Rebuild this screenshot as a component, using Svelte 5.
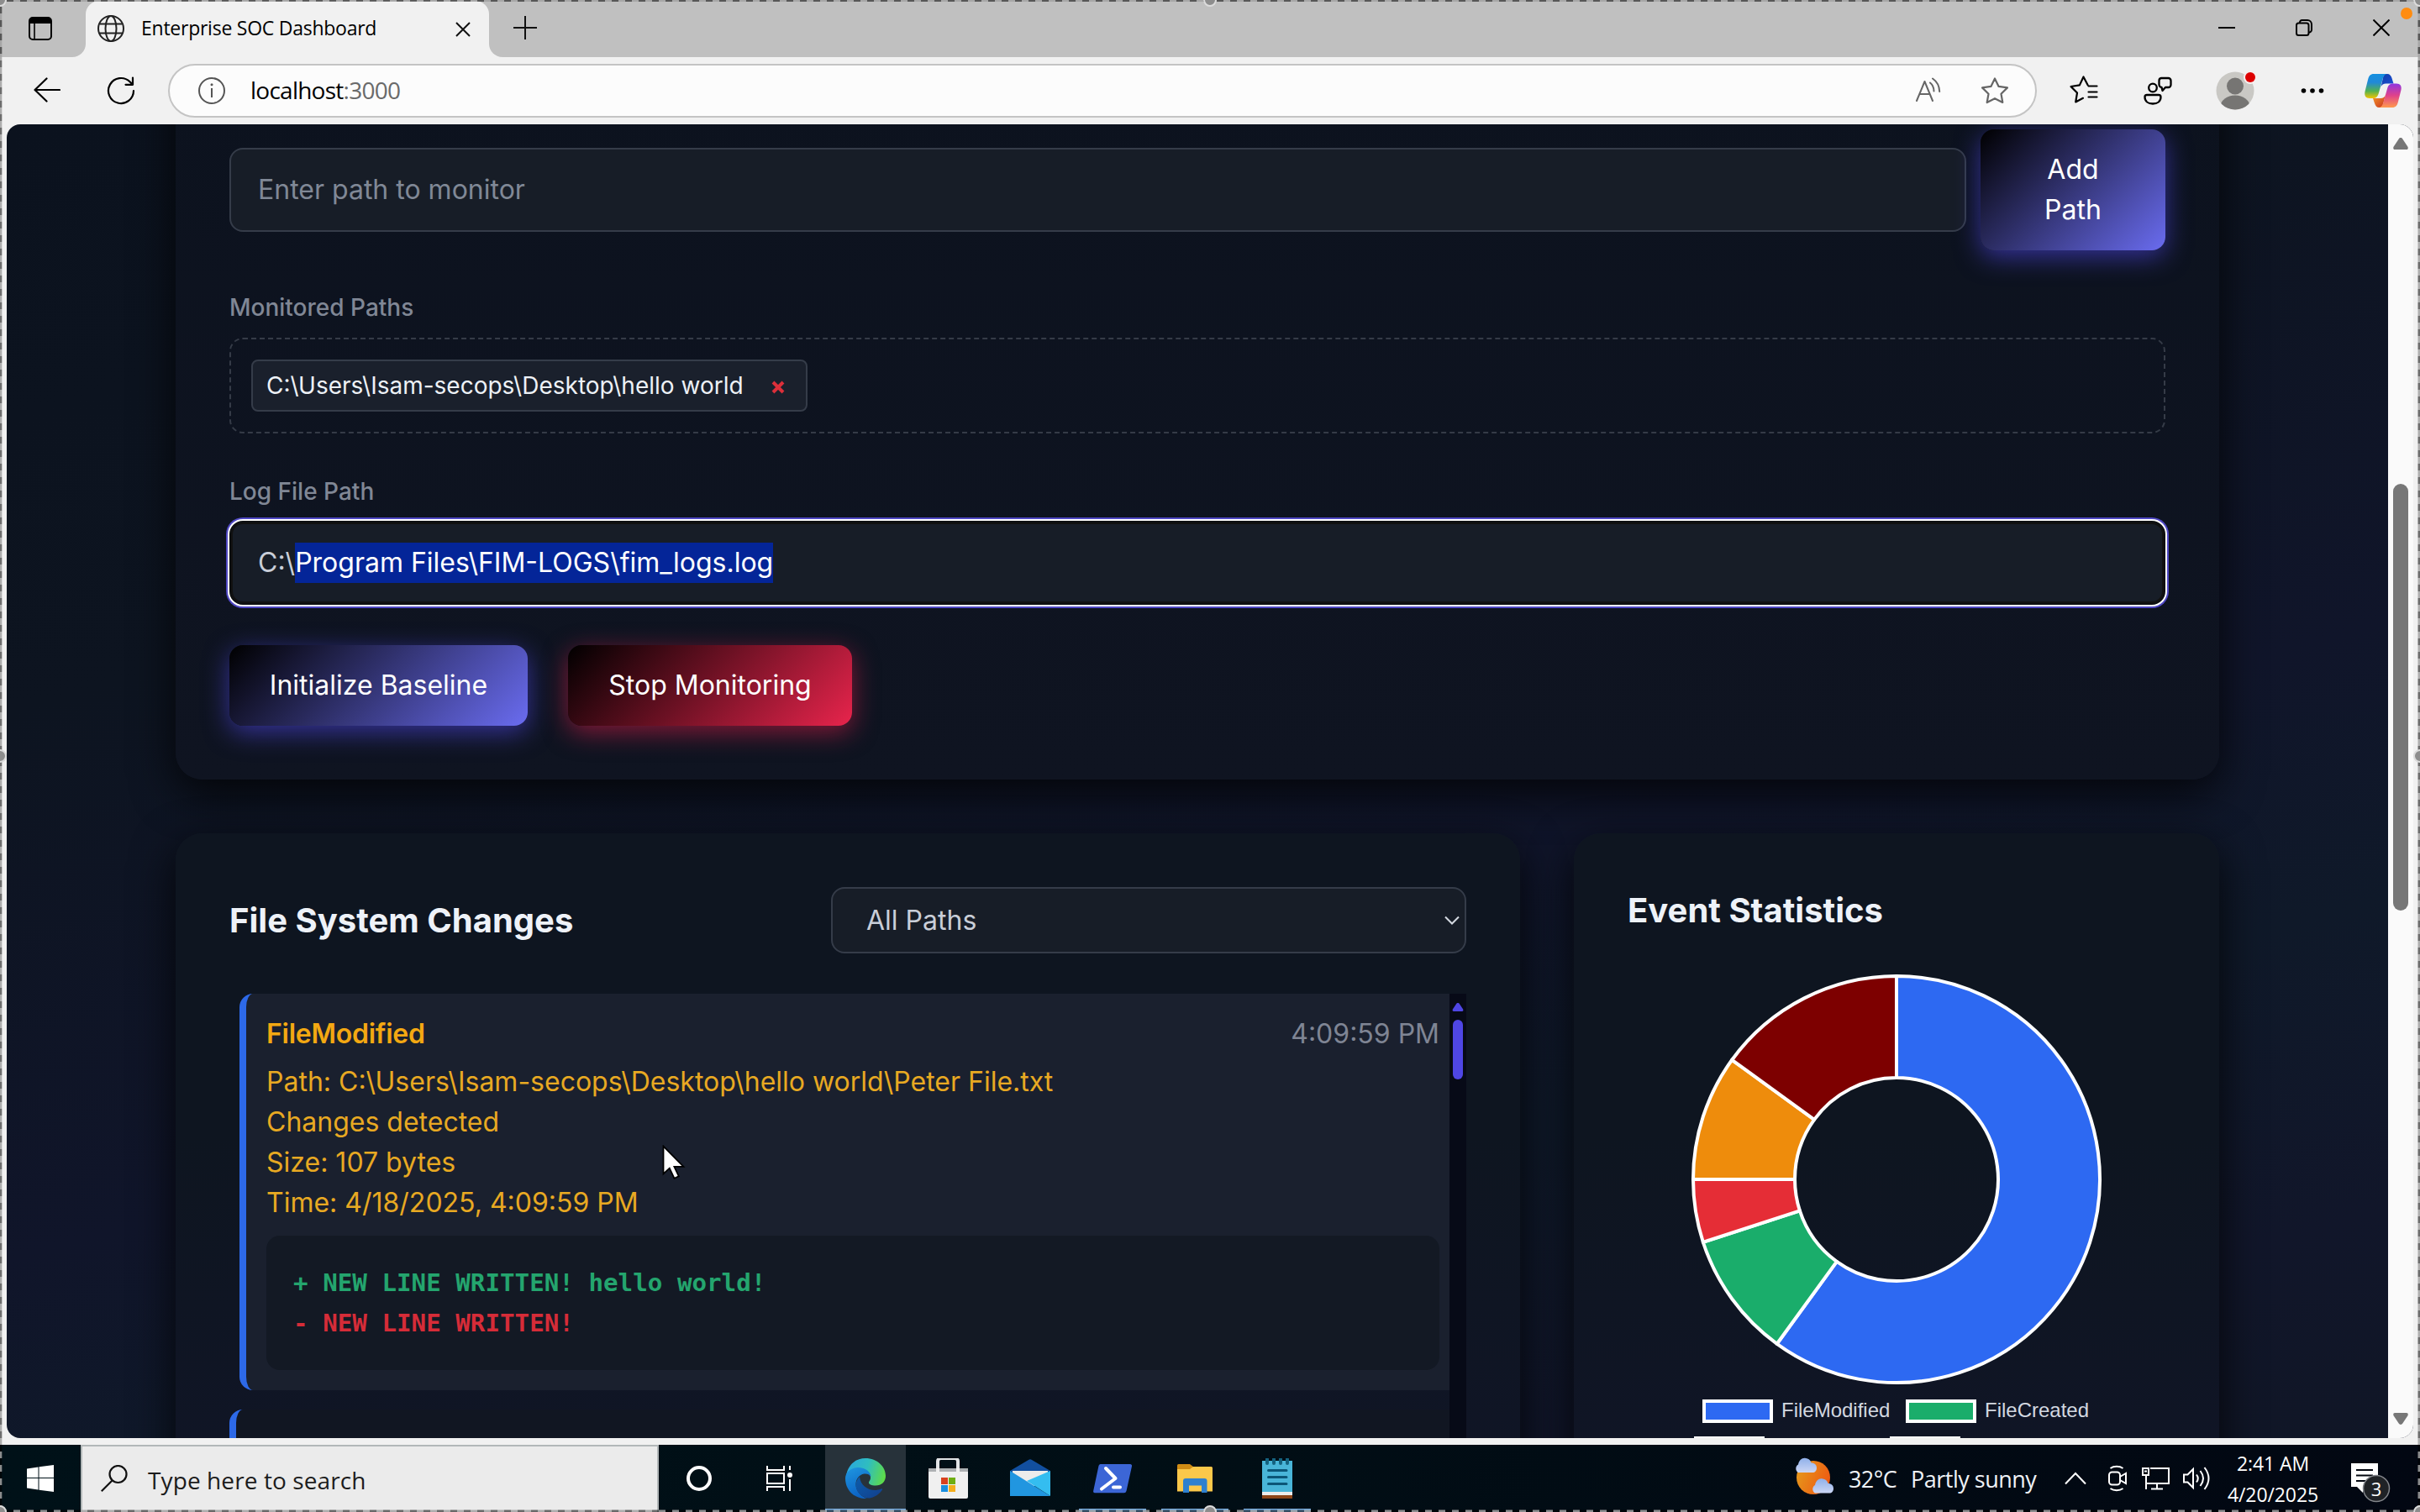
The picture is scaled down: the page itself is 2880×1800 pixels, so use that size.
<script>
  const monitored = ['C:\\Users\\Isam-secops\\Desktop\\hello world'];

  const details = [
    'Path: C:\\Users\\Isam-secops\\Desktop\\hello world\\Peter File.txt',
    'Changes detected',
    'Size: 107 bytes',
    'Time: 4/18/2025, 4:09:59 PM'
  ];

  const stats = [
    { label: 'FileModified', share: 0.6, color: '#2d69f2' },
    { label: 'FileCreated', share: 0.1, color: '#1aad6b' },
    { label: 'FileDeleted', share: 0.05, color: '#e52d36' },
    { label: 'FileRenamed', share: 0.1, color: '#ee8c0c' },
    { label: 'AccessDenied', share: 0.15, color: '#7d0000' }
  ];

  const C = 246;
  const R = 242;
  const r = 121;

  function point(radius, t) {
    const a = t * Math.PI * 2;
    return `${(C + radius * Math.sin(a)).toFixed(2)} ${(C - radius * Math.cos(a)).toFixed(2)}`;
  }

  let start = 0;
  const slices = stats.map((s) => {
    const end = start + s.share;
    const large = s.share > 0.5 ? 1 : 0;
    const d = `M${point(R, start)}A${R} ${R} 0 ${large} 1 ${point(R, end)}L${point(r, end)}A${r} ${r} 0 ${large} 0 ${point(r, start)}Z`;
    start = end;
    return { d, color: s.color };
  });
</script>

<div class="screen">
  <header class="tabs">
    <div class="tabs-left">
      <svg width="28" height="28" viewBox="0 0 28 28"><rect x="1" y="1" width="26" height="26" rx="4" fill="none" stroke="#000" stroke-width="2" /><path d="M1 8V5a4 4 0 0 1 4-4h18a4 4 0 0 1 4 4v3zM6.2 8h1.6v18H6.2z" /></svg>
    </div>
    <div class="tab-slot">
      <div class="tab">
        <svg width="32" height="32" viewBox="0 0 32 32" fill="none" stroke="#222" stroke-width="2"><circle cx="16" cy="16" r="15" /><ellipse cx="16" cy="16" rx="6.5" ry="15" /><path d="M2.5 10.5h27M2.5 21.5h27" /></svg>
        <span class="tab-title">Enterprise SOC Dashboard</span>
        <svg class="tab-close" width="18" height="18" viewBox="0 0 18 18" stroke="#111" stroke-width="2"><path d="M1 1l16 16M17 1L1 17" /></svg>
      </div>
    </div>
    <div class="tabs-right">
      <svg width="28" height="28" viewBox="0 0 28 28" stroke="#111" stroke-width="2"><path d="M14 0v28M0 14h28" /></svg>
      <div class="controls">
        <svg width="20" height="20" viewBox="0 0 20 20" stroke="#000" stroke-width="2"><path d="M0 10h20" /></svg>
        <svg width="20" height="20" viewBox="0 0 20 20" fill="none" stroke="#000" stroke-width="2"><rect x="1" y="4.5" width="14.5" height="14.5" rx="2.5" /><path d="M5 4V3.500a2.500 2.500 0 0 1 2.500-2.500H14a5 5 0 0 1 5 5v6.500a3 3 0 0 1-3 3" /></svg>
        <svg width="20" height="20" viewBox="0 0 20 20" stroke="#000" stroke-width="2"><path d="M.5.5l19 19M19.500.5l-19 19" /></svg>
      </div>
    </div>
  </header>

  <nav class="toolbar">
    <svg class="back" width="32" height="32" viewBox="0 0 32 32" fill="none" stroke="#000" stroke-width="2.200" stroke-linecap="round" stroke-linejoin="round"><path d="M31 15H1.500M15.500 1.500L1.500 15l14 13.500" /></svg>
    <svg class="reload" width="34" height="34" viewBox="0 0 34 34" fill="none" stroke="#000" stroke-width="2.200" stroke-linecap="round" stroke-linejoin="round"><path d="M32 17a15 15 0 1 1-4.500-10.700L31 9.800M31 1.500v8.300h-8.500" /></svg>
    <div class="address">
      <svg width="34" height="34" viewBox="0 0 34 34" fill="none" stroke="#555" stroke-width="2"><circle cx="17" cy="17" r="15" /><path d="M17 14v11" /><circle cx="17" cy="9.800" r="1.500" fill="#555" stroke="none" /></svg>
      <span class="url">localhost<span class="port">:3000</span></span>
      <svg class="aloud" width="34" height="32" viewBox="0 0 34 32" fill="none" stroke="#666" stroke-width="2" stroke-linecap="round" stroke-linejoin="round"><path d="M2 28L11.500 5 21 28M5.500 20h12M18 6.500c3 2.500 4.500 5.800 4.500 10M21 1.500c5 3.500 8 8.500 8.200 15.500" /></svg>
      <svg class="fav" width="34" height="34" viewBox="0 0 34 34" fill="none" stroke="#666" stroke-width="2.200" stroke-linejoin="round"><path d="M17 2.500l4.600 9.400 10.400 1.500-7.500 7.300 1.800 10.300L17 26.200 7.700 31l1.800-10.300L2 13.400l10.400-1.500z" /></svg>
    </div>
    <svg class="t1" width="48" height="48" viewBox="0 0 48 48" fill="none" stroke="#000" stroke-width="2.200" stroke-linecap="round" stroke-linejoin="round"><path d="M28.500 17l-5-9.500-4.600 9.900L8.500 19l7.500 7.500L14.200 37.500l8.800-4.700M29.500 18.500h10M29.500 25.500h10M29.500 31.500h10" /></svg>
    <svg class="t2" width="48" height="48" viewBox="0 0 48 48" fill="none" stroke="#000" stroke-width="2.300" stroke-linejoin="round"><circle cx="18" cy="20.500" r="4.800" /><path d="M11 29h14a2.500 2.500 0 0 1 2.500 2.500c0 5-4 8-9.500 8s-9.500-3-9.500-8A2.500 2.500 0 0 1 11 29zM28 9h8.500a3 3 0 0 1 3 3v5a3 3 0 0 1-3 3h-3.500l-3.500 4-1-4.200a3 3 0 0 1-3-3V12a3 3 0 0 1 2.500-3z" /></svg>
    <svg class="t3" width="56" height="56" viewBox="0 0 56 56"><clipPath id="av"><circle cx="26" cy="28" r="22.500" /></clipPath><circle cx="26" cy="28" r="22.500" fill="#c9c8c4" /><g clip-path="url(#av)" fill="#767573"><circle cx="26" cy="22.500" r="10" /><ellipse cx="26" cy="47" rx="17.500" ry="13.500" /></g><circle cx="44" cy="12" r="8" fill="#f6eeee" /><circle cx="44" cy="12" r="6" fill="#d00" /></svg>
    <svg class="t4" width="48" height="48" viewBox="0 0 48 48"><circle cx="13.500" cy="24" r="2.800" /><circle cx="24" cy="24" r="2.800" /><circle cx="34.500" cy="24" r="2.800" /></svg>
    <svg class="t5" width="48" height="48" viewBox="0 0 48 48">
      <defs>
        <linearGradient id="c1" x1="0" y1="0" x2="0" y2="1"><stop offset="0" stop-color="#1590e0" /><stop offset=".35" stop-color="#2189d8" /><stop offset=".7" stop-color="#52b152" /><stop offset="1" stop-color="#f3c400" /></linearGradient>
        <linearGradient id="c2" x1="0" y1="0" x2="0" y2="1"><stop offset="0" stop-color="#8f35e0" /><stop offset=".5" stop-color="#e0428a" /><stop offset="1" stop-color="#ff9a4d" /></linearGradient>
        <linearGradient id="c3" x1="0" y1="0" x2="1" y2="1"><stop offset="0" stop-color="#123fa8" /><stop offset="1" stop-color="#1c50d8" /></linearGradient>
        <linearGradient id="c4" x1="0" y1="0" x2="1" y2="1"><stop offset="0" stop-color="#f59a2c" /><stop offset="1" stop-color="#c8321e" /></linearGradient>
      </defs>
      <path d="M25 4h4c3 0 4.500 2 5.500 5l2 6.500h-9c-3 0-5 1.500-6 4z" fill="url(#c3)" />
      <path d="M23 44h-3.500c-3 0-4.500-2-5.500-5l-2-6h9c3 0 5-1.500 6-4z" fill="url(#c4)" />
      <path d="M13 4h16c-3 0-4.500 3-5.500 6.500L18.500 28c-1 3-3 5-6 5H8c-4.500 0-6.500-3-5.500-8L6 11c1-4.500 3-7 7-7z" fill="url(#c1)" />
      <path d="M35 44H19c3 0 4.500-3 5.500-6.500L29.500 20c1-3 3-4.500 6-4.500H40c4.500 0 6.500 3 5.500 7.500L42 37c-1 4.500-3 7-7 7z" fill="url(#c2)" />
    </svg>
  </nav>

  <main class="viewport">
    <div class="page">
      <section class="card config">
        <div class="path-row">
          <div class="field placeholder">Enter path to monitor</div>
          <button class="btn add">Add<br />Path</button>
        </div>
        <p class="label">Monitored Paths</p>
        <div class="dropzone">
          {#each monitored as path}
            <div class="chip"><span>{path}</span><svg width="16" height="16" viewBox="0 0 16 16" stroke="#dc2f3a" stroke-width="4"><path d="M2 2l12 12M14 2L2 14" /></svg></div>
          {/each}
        </div>
        <p class="label log">Log File Path</p>
        <div class="field focused"><span>C:\</span><mark>Program Files\FIM-LOGS\fim_logs.log</mark></div>
        <div class="actions">
          <button class="btn init">Initialize Baseline</button>
          <button class="btn stop">Stop Monitoring</button>
        </div>
      </section>

      <div class="columns">
        <section class="card changes">
          <div class="head">
            <h2>File System Changes</h2>
            <div class="select">
              <span>All Paths</span>
              <svg width="18" height="12" viewBox="0 0 18 12" fill="none" stroke="#d5dae2" stroke-width="2"><path d="M1 1.500l8 8 8-8" /></svg>
            </div>
          </div>
          <div class="feed">
            <div class="events">
              <article class="event active">
                <div class="event-head"><strong>FileModified</strong><time>4:09:59 PM</time></div>
                <div class="details">
                  {#each details as line}<p>{line}</p>{/each}
                </div>
                <div class="diff">
                  <p class="plus">+ NEW LINE WRITTEN! hello world!</p>
                  <p class="minus">- NEW LINE WRITTEN!</p>
                </div>
              </article>
              <article class="event"></article>
            </div>
            <div class="track">
              <svg width="14" height="10" viewBox="0 0 14 10" fill="#4f46e5"><path d="M7 0c1 0 1.500.5 2 1.300l4 6C13.800 8.700 13.300 10 12 10H2C.7 10 .2 8.700 1 7.300l4-6C5.500.5 6 0 7 0z" /></svg>
              <div class="thumb"></div>
            </div>
          </div>
        </section>

        <section class="card statistics">
          <h2>Event Statistics</h2>
          <svg class="donut" width="492" height="492" viewBox="0 0 492 492" stroke="#fff" stroke-width="4" stroke-linejoin="round">
            {#each slices as s}<path d={s.d} fill={s.color} />{/each}
          </svg>
          <div class="legend">
            <i class="blue"></i><span>FileModified</span><i class="green"></i><span>FileCreated</span>
          </div>
          <div class="legend second"><i class="red"></i><i class="orange"></i></div>
        </section>
      </div>
    </div>

    <aside class="scrollbar">
      <svg width="18" height="14" viewBox="0 0 18 14" fill="#777"><path d="M9 0c1 0 1.700.5 2.300 1.400l6 9.200C18.300 12.300 17.600 14 16 14H2C.4 14-.3 12.300.7 10.600l6-9.200C7.300.5 8 0 9 0z" /></svg>
      <div class="bar"></div>
      <svg class="down" width="18" height="14" viewBox="0 0 18 14" fill="#777"><path d="M9 14c-1 0-1.700-.5-2.300-1.400l-6-9.200C-.3 1.700.4 0 2 0h14c1.600 0 2.300 1.700 1.300 3.400l-6 9.200C10.700 13.500 10 14 9 14z" /></svg>
    </aside>
  </main>

  <footer class="taskbar">
    <div class="start"><svg width="32" height="32" viewBox="0 0 32 32" fill="#fff"><path d="M0 4.500l13.500-2V15H0zM14.500 2.300L32 0v15H14.500zM0 16h13.500v13.500L0 27.500zM14.500 16H32v16l-17.500-2.300z" /></svg></div>
    <div class="search">
      <svg width="32" height="32" viewBox="0 0 32 32" fill="none" stroke="#111" stroke-width="2.200"><circle cx="20.500" cy="11" r="10" /><path d="M13.500 18.500L.8 31.200" /></svg>
      <span>Type here to search</span>
    </div>
    <div class="app"><svg width="32" height="32" viewBox="0 0 32 32" fill="none" stroke="#fff" stroke-width="4"><circle cx="16" cy="16" r="13" /></svg></div>
    <div class="app view"><svg width="34" height="32" viewBox="0 0 34 32" fill="none" stroke="#fff" stroke-width="2"><path d="M2 1v5h20V1M2 31v-5h20v5M2 10h20v12H2zM29 1v5M29 17v14" /><circle cx="29" cy="12" r="3" fill="#fff" stroke="none" /></svg></div>
    <div class="app edge">
      <svg width="48" height="48" viewBox="0 0 48 48">
        <defs>
          <linearGradient id="e1" x1="0" y1=".4" x2="1" y2=".6"><stop offset="0" stop-color="#2aa8dd" /><stop offset=".5" stop-color="#2fbdc0" /><stop offset="1" stop-color="#5fdc46" /></linearGradient>
          <linearGradient id="e2" x1="0" y1="0" x2=".4" y2="1"><stop offset="0" stop-color="#1f97e0" /><stop offset="1" stop-color="#0b62c4" /></linearGradient>
          <linearGradient id="e3" x1="0" y1="0" x2="1" y2="1"><stop offset="0" stop-color="#0c5cab" /><stop offset="1" stop-color="#123f8c" /></linearGradient>
        </defs>
        <path d="M1 21C3 8 12 0 24 0c14 0 24 10 24 21 0 7-5 11.500-12 11.500-5 0-8-1.500-8-3.500 0-1.500 2-2.500 2-6 0-6-6-11-13-11C9 12 3 15 1 21z" fill="url(#e1)" />
        <path d="M0 24c0-7 7-13 15-13 9 0 15 5 15.500 11-2-3-5-4-8-3.500-6 1-10 6-10 12.500 0 8 6 14.500 13 17C11 49 0 38 0 24z" fill="url(#e2)" />
        <path d="M17 22c-3 3-4.500 6-4.500 10C13 42 22 48 29 47.500c6-1 12-5 15-10 .5-1-.5-1.500-1.500-1C32 41 18 35 17 22z" fill="url(#e3)" />
      </svg>
    </div>
    <div class="app">
      <svg width="48" height="48" viewBox="0 0 48 48"><path d="M12 20V3.500A3.500 3.500 0 0 1 15.500 0h17A3.500 3.500 0 0 1 36 3.500V20" fill="none" stroke="#e2e4e6" stroke-width="4" /><path d="M1 12h47v5H1z" fill="#aeb1b3" /><path d="M1 16h47v30a2 2 0 0 1-2 2H3a2 2 0 0 1-2-2z" fill="#f0f0f0" /><path d="M10 12h4v4h-4zM34 12h4v4h-4z" fill="#f0f0f0" /><path d="M16 23h8v8h-8z" fill="#d8421f" /><path d="M25 23h8v8h-8z" fill="#6fae12" /><path d="M16 32h8v8h-8z" fill="#1a8ede" /><path d="M25 32h8v8h-8z" fill="#f5ae1c" /></svg>
    </div>
    <div class="app">
      <svg width="48" height="48" viewBox="0 0 48 48"><path d="M0 15L22 2q2-1.500 4 0l22 13v8H0z" fill="#124f9f" /><path d="M3 15h42v18H3z" fill="#ececec" /><path d="M48 15v30L20 27z" fill="#34bdf0" /><path d="M0 15l48 30H0z" fill="#2196e0" /></svg>
    </div>
    <div class="app running">
      <svg width="48" height="48" viewBox="0 0 48 48"><path d="M9.500 7H45a2 2 0 0 1 2 2.500L40.500 39a3 3 0 0 1-3 2.300H3a2 2 0 0 1-1.800-2.500L7.500 9a2.500 2.500 0 0 1 2-2z" fill="#3c66d6" /><path d="M16 12l11.500 12L11 36.500" fill="none" stroke="#fff" stroke-width="4" stroke-linecap="round" stroke-linejoin="round" /><path d="M25 34.500h8" stroke="#fff" stroke-width="4" stroke-linecap="round" /></svg>
    </div>
    <div class="app running">
      <svg width="48" height="48" viewBox="0 0 48 48"><path d="M3 8.500A1.500 1.500 0 0 1 4.500 7H18l4 3v5H3z" fill="#d08c14" /><path d="M3 13h15l4-3h21.500A1.500 1.500 0 0 1 45 11.500v28H3z" fill="#fbc84a" /><path d="M10 41V27a3 3 0 0 1 3-3h22.500a3 3 0 0 1 3 3v14H32v-8.500H17V41z" fill="#2f80cf" /></svg>
    </div>
    <div class="app running notes">
      <svg width="48" height="48" viewBox="0 0 48 48"><path d="M6 44h36v4H6z" fill="#8d4518" /><path d="M6 38h36v6H6z" fill="#ececec" /><path d="M6 3h36v37H6z" fill="#49b5d8" /><path d="M12 1v5M20 1v5M28 1v5M36 1v5" stroke="#14627f" stroke-width="4" stroke-linecap="round" /><path d="M13.500 14.500h21.500M13.500 22.500h21.500M13.500 30.500h21.500" stroke="#0b5677" stroke-width="3" stroke-linecap="round" /></svg>
    </div>

    <div class="tray">
      <svg class="weather" width="50" height="46" viewBox="0 0 50 46">
        <defs><linearGradient id="sun" x1="0" y1=".2" x2="1" y2=".6"><stop offset="0" stop-color="#e59a1c" /><stop offset="1" stop-color="#ee5a12" /></linearGradient><linearGradient id="cl" x1="0" y1="0" x2="0" y2="1"><stop offset="0" stop-color="#8fb0ea" /><stop offset="1" stop-color="#cbd6f4" /></linearGradient></defs>
        <circle cx="24" cy="24" r="20" fill="url(#sun)" />
        <path d="M6 18a5.500 5.500 0 0 1 0-9.500 C7 3 11 0 15 1c4 .5 6 3 6.500 5.500 4 0 6.500 2.500 6.500 6s-2 5.500-5 5.500z" fill="url(#cl)" />
        <path d="M26 42.500a5.500 5.500 0 0 1 0-9.500c1-5.500 5-8.500 9-7.500 4 .5 6 3 6.500 5.500 4 0 6.500 2.500 6.500 6s-2 5.500-5 5.500z" fill="url(#cl)" />
      </svg>
      <span class="temp">32°C</span>
      <span class="sky">Partly sunny</span>
      <svg class="chev" width="26" height="16" viewBox="0 0 26 16" fill="none" stroke="#fff" stroke-width="2"><path d="M1 14.500L13 2l12 12.500" /></svg>
      <svg class="cam" width="24" height="32" viewBox="0 0 24 32" fill="none" stroke="#fff" stroke-width="2"><rect x="2" y="8.500" width="13" height="15" rx="3.500" /><path d="M15 14l7-4v12l-7-4M3.500 4c4-3 11-3 15 0M3.500 28c4 3 11 3 15 0" /></svg>
      <svg class="net" width="34" height="30" viewBox="0 0 34 30" fill="none" stroke="#fff" stroke-width="2"><path d="M10 3h22v18H6M1 3h7v8H1zM5 11v17M18 21v6M11 27.500h14M3 6.500h3" /></svg>
      <svg class="vol" width="34" height="30" viewBox="0 0 34 30" fill="none" stroke="#fff" stroke-width="2"><path d="M2 10.500h4.500L13 4v22l-6.500-6.500H2zM17 10.500q3.500 4.500 0 9M21.500 6q7 9 0 18M26.500 2q10 13 0 26" /></svg>
      <div class="clock"><span>2:41 AM</span><span>4/20/2025</span></div>
      <svg class="bell" width="52" height="54" viewBox="0 0 52 54"><path d="M2 6h32v28H16v7l-7-7H2z" fill="#fff" /><path d="M8 14h20M8 20.500h20M8 27h14" stroke="#02060f" stroke-width="2.200" /><circle cx="32" cy="36" r="15.500" fill="#1f2226" stroke="#82858a" stroke-width="1.500" /><text x="32" y="44.500" text-anchor="middle" class="count">3</text></svg>
    </div>
  </footer>

  <svg class="cursor" width="30" height="42" viewBox="0 0 30 42"><path d="M1.500 1.500v33l7.300-6.800 5.600 12 5.400-2.400-5.400-11.500h11z" fill="#fff" stroke="#000" stroke-width="1.800" /></svg>
  <span class="record"></span>
  <svg class="marquee" width="2880" height="1800" viewBox="0 0 2880 1800" fill="none" stroke-width="3">
    <g stroke="#000" stroke-opacity=".55" stroke-dasharray="8 8" stroke-dashoffset="8"><path d="M0 .5h2880M0 1799h2880" /><path d="M.8 0v1800M2879 0v1800" /></g>
    <g stroke="#a2a2a2" stroke-opacity=".85" stroke-dasharray="8 8"><path d="M0 .5h2880M0 1799h2880" /><path d="M.8 0v1800M2879 0v1800" /></g>
    <g fill="#8d8d8d" stroke="#dcdcdc" stroke-width="2"><circle cx="0" cy="0" r="7" /><circle cx="1440" cy="0" r="7" /><circle cx="2880" cy="0" r="7" /><circle cx="0" cy="900" r="7" /><circle cx="2880" cy="900" r="7" /><circle cx="0" cy="1800" r="7" /><circle cx="1440" cy="1800" r="7" /><circle cx="2880" cy="1800" r="7" /></g>
  </svg>
</div>

<style>
  :global(body) { margin: 0; overflow: hidden; }
  .screen { position: relative; width: 2880px; height: 1800px; overflow: hidden; display: flex; flex-direction: column; background: #f1f1f1; font-family: 'Open Sans', 'Noto Sans', sans-serif; }
  .screen * { box-sizing: border-box; }
  svg { display: block; flex: none; }
  p, h2 { margin: 0; }

  .tabs { display: flex; height: 68px; flex: none; }
  .tabs-left { width: 102px; background: #c0c0c0; border-bottom-right-radius: 16px; padding: 20px 0 0 34px; }
  .tab-slot { width: 480px; background: linear-gradient(#c0c0c0 0 34px, #f1f1f1 34px); padding-top: 1px; }
  .tab { height: 67px; background: #f1f1f1; border-radius: 16px 16px 0 0; display: flex; align-items: center; padding: 0 22px 1px 14px; }
  .tab-title { margin-left: 20px; margin-top: -2px; font-size: 23px; letter-spacing: -0.25px; color: #000; white-space: nowrap; }
  .tab-close { margin-left: auto; margin-top: 2px; }
  .tabs-right { flex: 1; background: #c0c0c0; border-bottom-left-radius: 16px; display: flex; align-items: center; padding: 0 36px 2px 29px; }
  .controls { margin-left: auto; display: flex; gap: 72px; }

  .toolbar { display: flex; align-items: center; height: 80px; flex: none; padding: 0 20px 0 40px; }
  .reload { margin-left: 55px; }
  .address { margin-left: 39px; width: 2224px; height: 64px; border: 2px solid #c4c4c4; border-radius: 32px; background: #fcfcfc; display: flex; align-items: center; padding-left: 33px; }
  .url { margin-left: 29px; margin-top: -2px; font-size: 28px; letter-spacing: -0.75px; color: #000; }
  .port { color: #6a6a6a; }
  .aloud { margin-left: auto; }
  .fav { margin: 0 31px 0 44px; }
  .t1 { margin-left: 32px; }
  .t2 { margin-left: 40px; }
  .t3 { margin-left: 42px; }
  .t4 { margin-left: 38px; }
  .t5 { margin-left: 36px; }

  .viewport { margin: 0 8px; height: 1564px; flex: none; display: flex; overflow: hidden; border-radius: 16px; background: linear-gradient(165deg, #0b121e 0%, #0d1420 30%, #10152a 58%, #0f1929 72%, #11162a 88%, #101626 100%); font-family: Inter, 'Liberation Sans', sans-serif; }
  .page { flex: 1; padding: 0 201px; min-width: 0; }
  .card { background: linear-gradient(#0e1520 40%, #101526 85%); border-radius: 32px; padding: 64px; box-shadow: 0 16px 52px rgba(0, 0, 0, 0.78); }
  .config { margin-top: -100px; padding-top: 106px; background: linear-gradient(#0c121e, #0f1421); }
  .path-row { display: flex; align-items: center; gap: 17px; }
  .field { flex: 1; height: 100px; border: 2px solid #353c49; border-radius: 16px; background: #171d27; padding-left: 32px; font-size: 32px; line-height: 96px; color: #c9ced8; white-space: pre; }
  .placeholder { color: #808896; }
  .btn { border: 0; border-radius: 16px; font-family: inherit; font-size: 32px; line-height: 48px; color: #fff; padding: 0; height: 96px; font-weight: 400; background: linear-gradient(135deg, #000, #6a6cf0); box-shadow: 0 8px 30px rgba(79, 70, 229, 0.6); white-space: nowrap; }
  .add { width: 220px; height: 144px; }
  .init { width: 355px; }
  .stop { width: 338px; background: linear-gradient(135deg, #000, #e8244c); box-shadow: 0 8px 30px rgba(225, 29, 72, 0.55); }
  .label { margin-top: 44px; margin-bottom: 12px; font-size: 28px; line-height: 48px; font-weight: 500; color: #808795; }
  .label.log { margin-top: 45px; margin-bottom: 11px; }
  .dropzone { height: 114px; border: 2px dashed #353b47; border-radius: 16px; padding: 24px; display: flex; }
  .chip { height: 62px; display: flex; align-items: center; gap: 33px; padding: 0 25px 0 16px; border: 2px solid #353c49; border-radius: 8px; background: #1a202c; color: #edf1f6; font-size: 28px; }
  .chip svg { margin-top: 3px; }
  .focused { display: flex; align-items: center; line-height: 48px; box-shadow: 0 0 0 2px #fff, 0 0 0 4px #4f48c4, inset 0 0 0 2px #111; border-color: #0d0f10; }
  mark { display: block; height: 48px; background: #042598; color: #fff; }
  .actions { margin-top: 48px; display: flex; gap: 48px; }

  .columns { margin-top: 64px; display: flex; gap: 64px; }
  .columns .card { height: 900px; }
  .changes { width: 1600px; }
  .statistics { width: 768px; display: flex; flex-direction: column; align-items: center; }
  h2 { font-size: 40px; line-height: 48px; font-weight: 700; color: #eef2f8; white-space: nowrap; }
  .statistics h2 { align-self: flex-start; margin-top: 4px; }
  .head { display: flex; align-items: center; justify-content: space-between; }
  .select { width: 756px; height: 79px; border: 2px solid #353c49; border-radius: 16px; background: #171d27; display: flex; align-items: center; justify-content: space-between; padding: 0 6px 0 40px; font-size: 32px; color: #c9ced8; }
  .feed { margin-top: 48px; display: flex; height: 700px; }
  .events { flex: 1; }
  .event { height: 400px; margin-top: 23px; border-left: 8px solid #2d69e8; border-radius: 16px 0 0 16px; background: #111622; padding: 24px 12px 24px 24px; }
  .event.active { height: 472px; margin: 0 0 0 12px; background: #1a202e; }
  .event-head { display: flex; justify-content: space-between; line-height: 48px; font-size: 32px; }
  strong { font-weight: 600; color: #f3a812; font-size: 32px; letter-spacing: -0.25px; }
  time { color: #7f8594; }
  .details { margin-top: 9px; font-size: 32px; line-height: 48px; color: #e8a922; white-space: nowrap; }
  .diff { margin-top: 15px; height: 160px; border-radius: 16px; background: #131924; padding: 32px; font-family: 'DejaVu Sans Mono', monospace; font-weight: 700; font-size: 29.200px; line-height: 48px; white-space: nowrap; }
  .plus { color: #24a56e; }
  .minus { color: #d62c38; }
  .track { width: 20px; background: #070a17; display: flex; flex-direction: column; align-items: center; padding-top: 11px; }
  .thumb { width: 12px; height: 71px; margin-top: 10px; border-radius: 6px; background: #4f46e5; }

  .donut { margin-top: 50px; }
  .legend { margin-top: 16px; align-self: flex-start; display: flex; align-items: center; height: 28px; margin-left: 89px; font-family: 'Liberation Sans', sans-serif; font-size: 24px; color: #d3d8e0; }
  .legend i { width: 84px; height: 28px; border: 4px solid #fff; }
  .legend span { margin: -2px 0 0 10px; width: 148px; }
  .legend.second { margin-left: 79px; gap: 149px; }
  .blue { background: #2d69f2; }
  .green { background: #1aad6b; }
  .red { background: #e52d36; }
  .orange { background: #ee8c0c; }

  .scrollbar { width: 30px; background: #fafafa; display: flex; flex-direction: column; align-items: center; padding: 16px 0 16px; }
  .bar { width: 18px; height: 508px; margin-top: 398px; border-radius: 9px; background: #777; }
  .down { margin-top: auto; }

  .taskbar { margin-top: 8px; height: 80px; flex: none; display: flex; background: linear-gradient(90deg, #001118 0%, #010e15 50%, #020712 100%); }
  .start { width: 96px; padding: 24px 0 0 32px; }
  .search { width: 688px; background: #ebebeb; border: 2px solid #b2b7b8; border-bottom: 0; display: flex; align-items: center; padding: 0 0 2px 22px; }
  .search span { margin-left: 24px; font-size: 28px; letter-spacing: 0.1px; color: #1c1c1c; padding-top: 4px; }
  .app { width: 96px; height: 80px; margin-right: 2px; display: flex; align-items: center; justify-content: center; }
  .app:nth-of-type(3) { margin-right: 0; }
  .view { margin-right: 6px; }
  .edge { background: linear-gradient(#27323a 76px, #76aadb 76px); }
  .running { background: linear-gradient(#76aadb, #76aadb) 50% 100% / 80px 4px no-repeat; }
  .tray { margin-left: auto; display: flex; align-items: center; color: #fff; }
  .weather { margin-top: -4px; }
  .temp { margin-left: 16px; width: 74px; font-size: 27px; letter-spacing: -0.6px; white-space: nowrap; color: #eef2f6; }
  .sky { width: 183px; font-size: 27px; letter-spacing: -0.5px; white-space: nowrap; color: #eef2f6; }
  .chev { margin-right: 25px; }
  .cam { margin-right: 17px; }
  .net { margin-right: 14px; }
  .clock { width: 150px; padding-top: 2px; display: flex; flex-direction: column; align-items: center; font-size: 23px; line-height: 37px; letter-spacing: -0.1px; margin: 0 1px 0 -1px; }
  .bell { margin: 6px 32px 0 15px; }
  .count { font: 22px 'Open Sans', sans-serif; fill: #fff; }

  .cursor { position: absolute; left: 788px; top: 1363px; }
  .record { position: absolute; left: 2857px; top: 9px; width: 14px; height: 14px; border-radius: 50%; background: #ff8c10; }
  .marquee { position: absolute; inset: 0; }
</style>
